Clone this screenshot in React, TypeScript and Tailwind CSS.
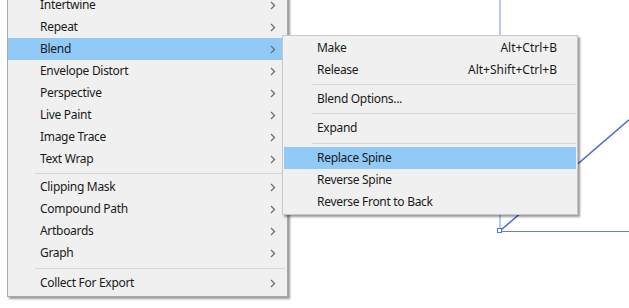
import React from "react";

type Item = { label: string; active?: boolean } | { sep: true; h: string };

const mainItems: Item[] = [
  { label: "Intertwine" },
  { label: "Repeat" },
  { label: "Blend", active: true },
  { label: "Envelope Distort" },
  { label: "Perspective" },
  { label: "Live Paint" },
  { label: "Image Trace" },
  { label: "Text Wrap" },
  { sep: true, h: "h-[6px]" },
  { label: "Clipping Mask" },
  { label: "Compound Path" },
  { label: "Artboards" },
  { label: "Graph" },
  { sep: true, h: "h-[8px]" },
  { label: "Collect For Export" },
];

type SubItem =
  | { label: string; shortcut?: string; active?: boolean }
  | { sep: true; h: string };

const subItems: SubItem[] = [
  { label: "Make", shortcut: "Alt+Ctrl+B" },
  { label: "Release", shortcut: "Alt+Shift+Ctrl+B" },
  { sep: true, h: "h-[7px]" },
  { label: "Blend Options..." },
  { sep: true, h: "h-[7px]" },
  { label: "Expand" },
  { sep: true, h: "h-[8px]" },
  { label: "Replace Spine", active: true },
  { label: "Reverse Spine" },
  { label: "Reverse Front to Back" },
];

const Chevron = () => (
  <svg width="6" height="9" viewBox="0 0 6 9" className="shrink-0">
    <polyline points="1,1 4.5,4.5 1,8" fill="none" stroke="#6e6e6e" strokeWidth="1.3" />
  </svg>
);

export default function App() {
  return (
    <div
      className="relative w-[629px] h-[308px] bg-white overflow-hidden text-[12px] tracking-[-0.3px] text-[#1a1a1a]"
      style={{ fontFamily: '"Noto Sans", "Noto Sans CJK KR", sans-serif' }}
    >
      <svg className="absolute inset-0" width="629" height="308">
        <line x1="500" y1="0" x2="500" y2="229" stroke="#a4b7f4" strokeWidth="1.5" />
        <line x1="501.5" y1="229.5" x2="629" y2="119.7" stroke="#4a68d0" strokeWidth="1.5" />
        <line x1="502" y1="231.5" x2="629" y2="231.5" stroke="#5b7fe6" strokeWidth="1" />
        <rect x="497.5" y="228.5" width="4" height="4" fill="white" stroke="#4f74e4" strokeWidth="1" />
      </svg>

      {/* main menu */}
      <div className="absolute left-[7px] top-[-8px] w-[281px] bg-[#f0f0f0] border border-[#a8a8a8] pt-[1px] pb-[2px] shadow-[2px_2px_2px_rgba(0,0,0,0.4)]">
        {mainItems.map((it, i) =>
          "sep" in it ? (
            <div key={i} className={`${it.h} flex items-center pl-[27px] pr-[2px]`}>
              <div className="h-px w-full bg-[#d5d5d5]" />
            </div>
          ) : (
            <div
              key={i}
              className={`h-[22px] flex items-center pl-[32px] pr-[11px] ${it.active ? "bg-[#91c9f7]" : ""}`}
            >
              <span className="flex-1 leading-none">{it.label}</span>
              <Chevron />
            </div>
          )
        )}
      </div>

      {/* submenu */}
      <div className="absolute left-[282px] top-[35px] w-[296px] bg-[#f0f0f0] border border-[#c8c8c8] p-[1px] shadow-[2px_2px_2px_rgba(0,0,0,0.4)]">
        {subItems.map((it, i) =>
          "sep" in it ? (
            <div key={i} className={`${it.h} flex items-center pl-[28px]`}>
              <div className="h-px w-full bg-[#d5d5d5]" />
            </div>
          ) : (
            <div
              key={i}
              className={`h-[22px] flex items-center pl-[33px] pr-[19px] ${it.active ? "bg-[#91c9f7]" : ""}`}
            >
              <span className="flex-1 leading-none">{it.label}</span>
              {it.shortcut && <span className="leading-none tracking-normal">{it.shortcut}</span>}
            </div>
          )
        )}
      </div>
    </div>
  );
}
